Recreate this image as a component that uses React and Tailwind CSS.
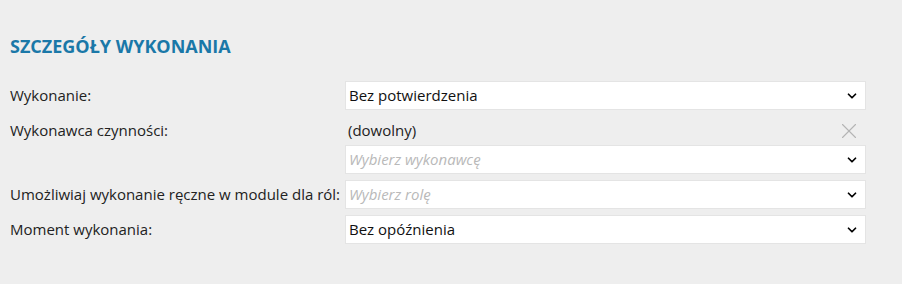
import { ChevronDown, X } from 'lucide-react';

function Select({ value, placeholder }) {
  return (
    <div className="h-[29px] bg-white border border-[#e4e4e4] flex items-center pl-[3px] pr-[6px]">
      <span className={value ? 'flex-1 text-[#111]' : 'flex-1 italic text-[#b9b9b9]'}>
        {value || placeholder}
      </span>
      <ChevronDown size={14} strokeWidth={3} className="text-black" />
    </div>
  );
}

export default function App() {
  return (
    <div
      className="min-h-[284px] bg-[#eeeeee] pl-[10px] pr-[36px] pt-[35px] text-[15px] text-[#222]"
      style={{ fontFamily: '"Open Sans", "Noto Sans", sans-serif' }}
    >
      <h2 className="text-[18px] font-bold text-[#1a78a8] leading-[22px] mb-[24px]">SZCZEGÓŁY WYKONANIA</h2>

      <div className="grid grid-cols-[335px_1fr] gap-y-[6px] items-center">
        {/* Wykonanie */}
        <div>Wykonanie:</div>
        <Select value="Bez potwierdzenia" />

        {/* Wykonawca */}
        <div className="self-start h-[29px] flex items-center">Wykonawca czynności:</div>
        <div className="flex flex-col">
          <div className="h-[29px] flex items-center pl-[3px] pr-[4px]">
            <span className="flex-1">(dowolny)</span>
            <X size={26} strokeWidth={1} className="text-[#b4b4b4]" />
          </div>
          <Select placeholder="Wybierz wykonawcę" />
        </div>

        <div className="whitespace-nowrap">Umożliwiaj wykonanie ręczne w module dla ról:</div>
        <Select placeholder="Wybierz rolę" />

        <div>Moment wykonania:</div>
        <Select value="Bez opóźnienia" />
      </div>
    </div>
  );
}
